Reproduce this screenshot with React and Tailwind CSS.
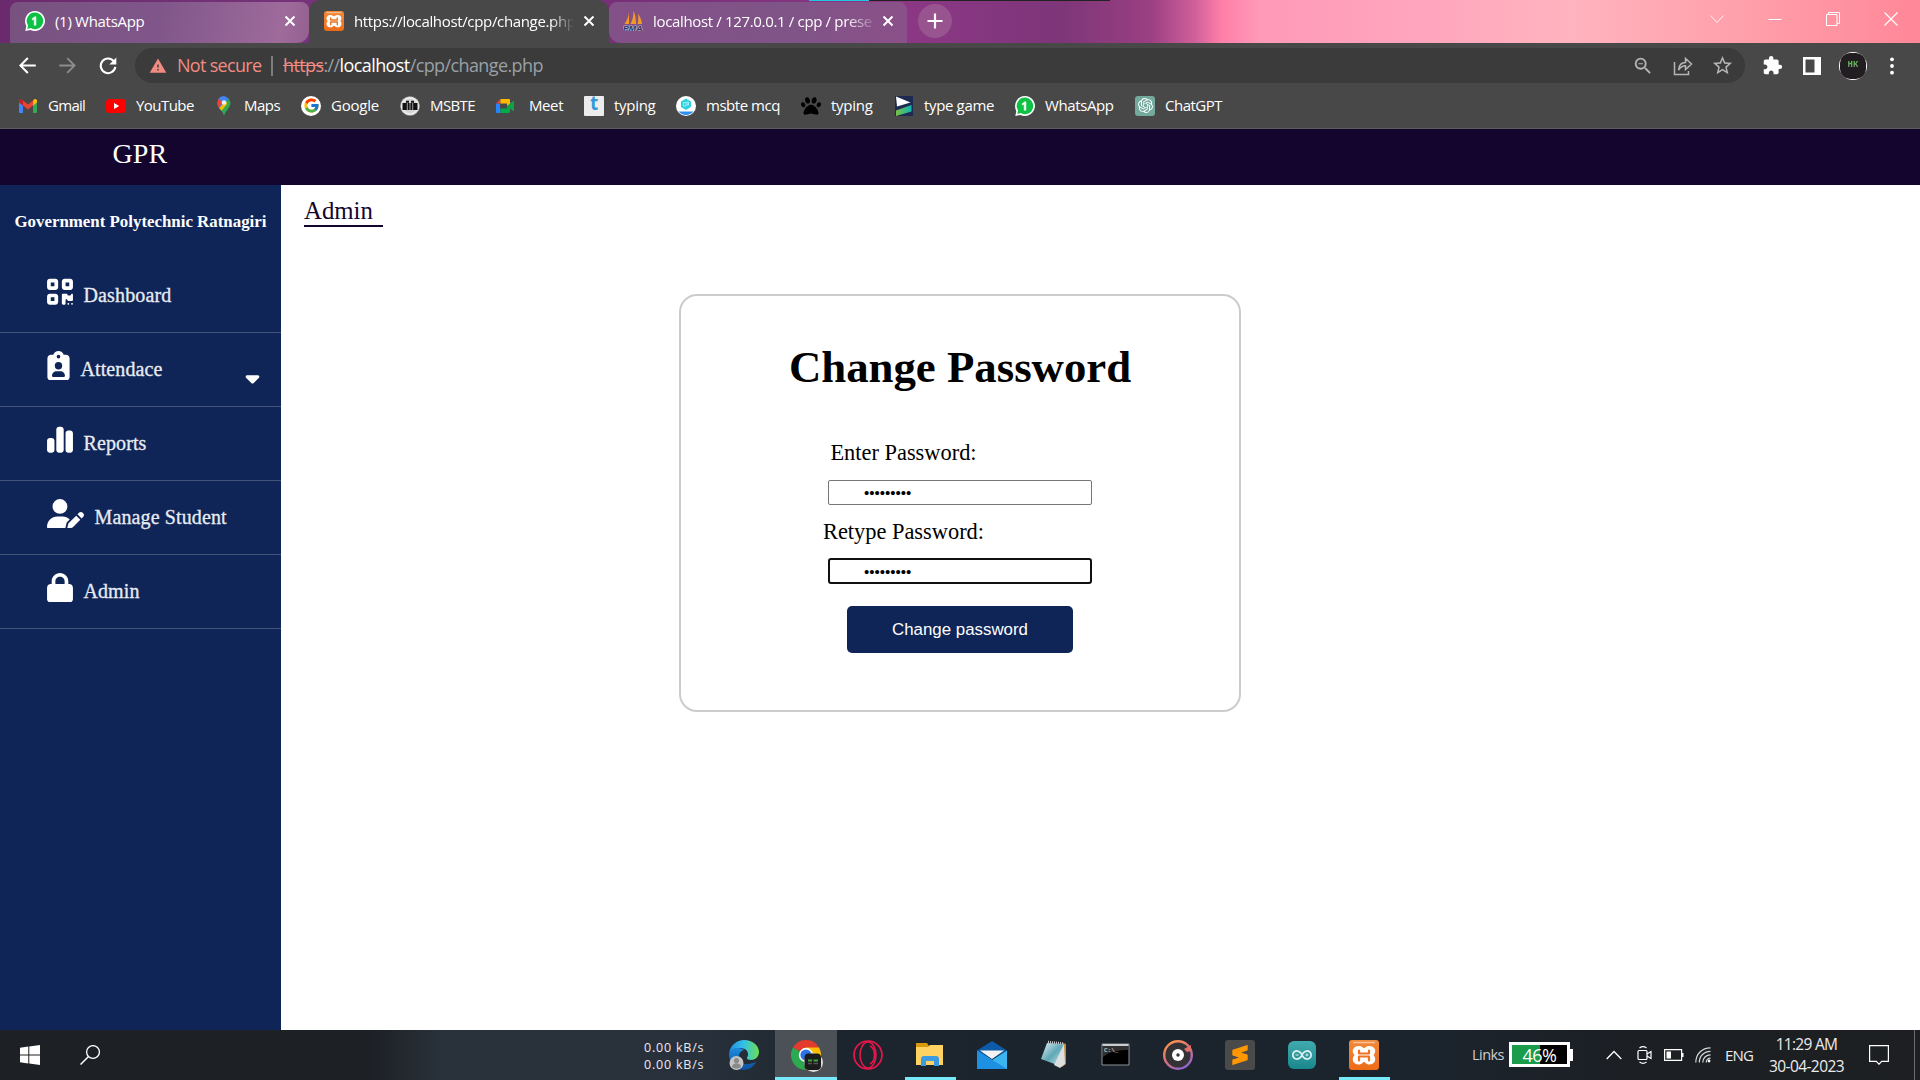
import React from "react";
import { FaQrcode, FaClipboardUser, FaChartSimple, FaUserPen, FaLock, FaPaw, FaSortDown } from "react-icons/fa6";
import { SiSublimetext, SiArduino, SiOpenai } from "react-icons/si";
import { FcGoogle } from "react-icons/fc";
import { MdExtension, MdWarning, MdStarOutline, MdZoomOut } from "react-icons/md";

/* ---------- small brand marks ---------- */
const WhatsAppIcon = () => (
  <svg viewBox="0 0 20 20" className="size-5 shrink-0">
    <path d="M10 0a10 10 0 1 1-4.6 18.9L.3 20l1-5.1A10 10 0 0 1 10 0z" fill="#fff" />
    <path d="M10 1.6a8.3 8.3 0 1 1-4.2 15.5l-3.5.8.8-3.4A8.3 8.3 0 0 1 10 1.6z" fill="#0cc143" />
    <path d="M10.9 14.2V5.8h-1L7.3 7.5v1.6l1.9-1.1v6.2z" fill="#fff" stroke="#fff" strokeWidth=".6" />
  </svg>
);
const XamppIcon = ({ size }) => (
  <span className={`${size} flex shrink-0 items-center justify-center rounded-[3px] bg-gradient-to-b from-[#f08a3c] to-[#ee6b14] text-white`}>
    <svg viewBox="0 0 30 30" className="size-full">
      <path d="M9.500 6c4 0 4 2 5.500 2s1.500-2 5.500-2c5.500 0 7.500 5.500 4 9 3.500 4 1.500 9.500-4 9.500-4 0-4-2.500-5.500-2.500s-1.500 2.500-5.500 2.500c-5.500 0-7.500-5.500-4-9.500-3.500-3.500-1.500-9 4-9z" fill="#fff" />
      <path d="M10 10.500v3h10v-3M10 20.500v-4h10v4" fill="none" stroke="#ee7422" strokeWidth="2.200" strokeLinecap="round" strokeLinejoin="round" />
      <path d="M4 2.500h22" stroke="#f8c39a" strokeWidth="1.500" />
    </svg>
  </span>
);
const PmaIcon = () => (
  <svg viewBox="0 0 20 20" className="size-5 shrink-0">
    <path d="M6 1v12H1.500C4 9 5.500 6 6 1zM10.500 0c2 4 2.500 8 2.500 13H7.500C9.500 9 10.500 5 10.500 0zM15 3c2.500 3 3.500 6 4 10h-4.500c1-3 1-6 .5-10z" fill="#f39a24" />
    <text x="0" y="19.500" fontSize="8" fontWeight="bold" fontStyle="italic" textLength="19.500" lengthAdjust="spacingAndGlyphs" fontFamily="Liberation Sans, sans-serif" fill="#2c3462" stroke="#b9bdd6" strokeWidth="1.200" className="[paint-order:stroke]">PMA</text>
  </svg>
);
const GmailIcon = () => (
  <svg viewBox="0 0 20 20" className="size-5">
    <path d="M1 5v11a1 1 0 0 0 1 1h3V8z" fill="#4285f4" />
    <path d="M19 5v11a1 1 0 0 1-1 1h-3V8z" fill="#34a853" />
    <path d="M5 4.500l5 4 5-4v5l-5 4-5-4z" fill="#ea4335" />
    <path d="M1 5c0-2 2-2.500 3-1.500l1 1v5L1 6.500z" fill="#c5221f" />
    <path d="M19 5c0-2-2-2.500-3-1.500l-1 1v5l4-3z" fill="#fbbc04" />
  </svg>
);
const YouTubeIcon = () => (
  <svg viewBox="0 0 20 20" className="size-5">
    <rect y="3" width="20" height="14" rx="3.500" fill="#f00" />
    <path d="M8 7l5.200 3L8 13z" fill="#fff" />
  </svg>
);
const MapsIcon = () => (
  <svg viewBox="0 0 20 20" className="size-5">
    <path d="M4.500 10.500C6 14 9 15 10 20c1-5 6.500-8 6.500-13.500L15 3z" fill="#34a853" />
    <path d="M3.500 7c0 2 .6 3.500 1.700 5L15 2.500 10 0C6 0 3.500 3 3.500 7z" fill="#4285f4" />
    <path d="M4.500 2.800L8 5.700 5.200 12C4 10.500 3.500 9 3.500 7z" fill="#ea4335" />
    <path d="M5.200 12L12 5l1 3-5.500 6.800z" fill="#fbbc04" />
    <circle cx="10" cy="6.500" r="2.300" fill="#e9eef8" />
  </svg>
);
const GoogleBadge = () => (
  <span className="flex size-5 items-center justify-center rounded-full bg-white"><FcGoogle size={17} /></span>
);
const MsbteIcon = () => (
  <svg viewBox="0 0 20 20" className="size-5">
    <circle cx="10" cy="10" r="9.600" fill="#e9e9e9" stroke="#8d8d8d" strokeWidth=".8" strokeDasharray="1.500 1" />
    <circle cx="10" cy="10" r="7" fill="#d2d2d2" />
    <path d="M2.500 7h15v7h-15z" fill="#111" />
    <path d="M7.300 7v7M12.700 7v7M10 4v10M5 5.500h10" stroke="#ddd" strokeWidth=".7" />
    <path d="M6 4.800h3v2H6zM11 4.800h3v2h-3z" fill="#111" />
  </svg>
);
const MeetIcon = () => (
  <svg viewBox="0 0 20 20" className="size-5">
    <path d="M1 7.500V16a1 1 0 0 0 1 1h3.500v-4.500H5V7.500z" fill="#2684fc" />
    <path d="M1 7.500L5.500 3v4.500z" fill="#ea4335" />
    <path d="M5.500 3H14a1 1 0 0 1 1 1v5l-3 1V7.500H5.500z" fill="#ffba00" />
    <path d="M5.500 17H14a1 1 0 0 0 1-1v-7l-3 1v2.500H5.500z" fill="#00ac47" />
    <path d="M12 10l6-5c.6-.4 1-.2 1 .5v9c0 .7-.4.900-1 .5z" fill="#11a046" />
  </svg>
);
const TypingIcon = () => (
  <span className="flex size-5 items-center justify-center rounded-[1px] bg-[#ececec] pb-1 font-['Open_Sans',sans-serif] text-[19px] leading-none font-bold text-[#3498db]">t</span>
);
const McqIcon = () => (
  <svg viewBox="0 0 20 20" className="size-5">
    <circle cx="10" cy="10" r="10" fill="#fff" />
    <path d="M10 2.500l5 2.900v5.700L10 14l-5-2.900V5.400z" fill="#2fd0e0" />
    <path d="M7.500 6.500h2.500v3.500H7.500zM11 6h1.500v3H11z" fill="none" stroke="#b9f3f8" strokeWidth=".8" />
    <path d="M2.500 15.500h15a10 10 0 0 1-15 0z" fill="#2f8ff0" />
  </svg>
);
const TypeGameIcon = () => (
  <svg viewBox="0 0 20 20" className="size-5">
    <defs><linearGradient id="tg" x1="0" x2="1"><stop offset="0" stopColor="#7ac142" /><stop offset="1" stopColor="#0fb5b0" /></linearGradient></defs>
    <path d="M1 0h18v20H1z" fill="#1f2a52" />
    <path d="M2 .5l14.500 6L3 10.500z" fill="#fff" />
    <path d="M17.500 9v6.500L2 20v-5.500z" fill="url(#tg)" />
  </svg>
);
const GptIcon = () => (
  <span className="flex size-5 items-center justify-center rounded-[3px] bg-[#74aa9c] text-white"><SiOpenai size={15} /></span>
);

/* ---------- browser chrome ---------- */
const CloseX = ({ className }) => (
  <svg viewBox="0 0 12 12" className={`size-3 shrink-0 ${className}`}><path d="M1.500 1.500l9 9m0-9l-9 9" stroke="#fff" strokeWidth="2" /></svg>
);

function Tab({ className, icon, title, titleClass }) {
  return (
    <div className={`flex items-center ${className}`}>
      {icon}
      <span className={`ml-[10px] w-[222px] shrink-0 overflow-hidden text-[15px] leading-5 whitespace-nowrap ${titleClass}`}>{title}</span>
      <CloseX className="ml-[7px]" />
    </div>
  );
}

function TabStrip() {
  return (
    <div className="relative flex h-[43px] bg-[linear-gradient(90deg,#6b2a6d_0px,#76337a_300px,#773078_620px,#8b3784_920px,#7d3679_1060px,#9a3f82_1150px,#d0609a_1195px,#ff7fa8_1222px,#ff9ab9_1260px,#ffa5bd_1420px,#ffb4bf_1570px,#ff9ba6_1780px,#ff8798_1920px)] pl-[10px] text-white">
      <Tab
        className="mt-[2px] h-[41px] w-[299px] rounded-t-lg rounded-br-xl bg-[linear-gradient(100deg,#77527f_0%,#80568a_50%,#9e6b9b_90%,#94608f_100%)] pb-[4px] pl-[15px]"
        icon={<WhatsAppIcon />}
        title="(1) WhatsApp"
        titleClass="tracking-[-0.3px]"
      />
      <Tab
        className="h-[43px] w-[300px] rounded-t-xl bg-[#484848] pb-[2px] pl-[15px]"
        icon={<XamppIcon size="size-5" />}
        title="https://localhost/cpp/change.php"
        titleClass="tracking-[-0.34px] [mask-image:linear-gradient(90deg,#000_197px,transparent_220px)]"
      />
      <Tab
        className="mt-[2px] h-[41px] w-[298px] rounded-t-lg rounded-bl-xl bg-[linear-gradient(90deg,#835088,#7f5487_60%,#8b5089)] pb-[4px] pl-[14px]"
        icon={<PmaIcon />}
        title="localhost / 127.0.0.1 / cpp / prese"
        titleClass="tracking-[-0.34px] [mask-image:linear-gradient(90deg,#000_193px,transparent_225px)]"
      />
      <div className="mt-[4px] ml-[11px] flex size-[34px] items-center justify-center rounded-full bg-[#97548f]">
        <svg viewBox="0 0 16 16" className="size-4"><path d="M8 .5v15M.5 8h15" stroke="#fff" strokeWidth="2.200" /></svg>
      </div>
      <div className="mt-[10px] mr-[22px] ml-auto flex h-[17px] items-center gap-[44px]">
        <svg viewBox="0 0 14 14" className="size-[14px]"><path d="M.5 3.500l6.500 7 6.500-7" fill="none" stroke="#fff" strokeWidth="1" opacity=".85" /></svg>
        <svg viewBox="0 0 14 14" className="size-[14px]"><path d="M.5 7.500h13" stroke="#fff" strokeWidth="1" /></svg>
        <svg viewBox="0 0 14 14" className="size-[14px]"><path d="M.5 2.500h10.500v11H.5zM2.500 2.500v-2h11v11h-2.500" fill="none" stroke="#fff" /></svg>
        <svg viewBox="0 0 14 14" className="size-[14px]"><path d="M.5.5l13 13m0-13l-13 13" stroke="#fff" strokeWidth="1.200" /></svg>
      </div>
      <div className="absolute top-0 left-[809px] flex h-[1px] w-[301px] bg-[#222]"><span className="w-[60px] bg-[#1fc8e6]" /></div>
    </div>
  );
}

function Toolbar() {
  return (
    <div className="flex h-[45px] items-center bg-[#484848] text-white">
      <svg viewBox="0 0 16 16" className="ml-[19px] size-[17px]"><path d="M15.800 8H1.500M8.300 1L1.300 8l7 7" fill="none" stroke="#fff" strokeWidth="2" /></svg>
      <svg viewBox="0 0 16 16" className="ml-[23px] size-[17px]"><path d="M.2 8h14.300M7.700 1l7 7-7 7" fill="none" stroke="#8c8c8c" strokeWidth="1.700" /></svg>
      <svg viewBox="0 0 18 18" className="ml-[23px] size-[18px]"><path d="M15 4.600A7.300 7.300 0 1 0 16.300 9.800" fill="none" stroke="#fff" strokeWidth="2.100" /><path d="M17.300.6v7H10.300z" fill="#fff" /></svg>
      <div className="ml-[18px] flex h-[35px] w-[1610px] items-center rounded-full bg-[#3b3b3b] pl-[14px]">
        <MdWarning size={18} color="#f28b82" />
        <span className="mb-px ml-[10px] w-[87px] text-[18px] leading-6 tracking-[-0.7px] whitespace-nowrap text-[#f28b82]">Not secure</span>
        <span className="ml-[7px] h-5 w-[2px] bg-[#7d7d7d]" />
        <span className="mb-px ml-[10px] text-[18px] leading-6 tracking-[-0.6px] whitespace-nowrap text-[#9aa0a6]">
          <span className="text-[#f28b82] line-through">https</span>://<span className="text-white">localhost</span>/cpp/change.php
        </span>
        <div className="mr-[11px] ml-auto flex items-center text-[#b5b5b5]">
          <MdZoomOut size={22} />
          <svg viewBox="0 0 20 20" className="ml-[19px] size-5"><path d="M1.500 6v12.500h14V15M5.500 14c.5-5 3-7.500 7-7.500V2.500l6 5.500-6 5.500V9.800c-3 0-5 1-7 4.200z" fill="none" stroke="#b5b5b5" strokeWidth="1.500" /></svg>
          <MdStarOutline size={23} className="ml-[18px]" />
        </div>
      </div>
      <MdExtension size={21} className="ml-[17px]" />
      <svg viewBox="0 0 18 18" className="ml-[20px] size-[18px]"><path d="M0 0h18v18H0z" fill="#fff" /><path d="M2.500 2.500h9v13h-9z" fill="#484848" /></svg>
      <div className="ml-[18px] flex size-[28px] items-center justify-center rounded-full bg-white">
        <div className="flex size-[26px] items-center justify-center rounded-[10px] bg-[#211d20] font-['Liberation_Mono',monospace] text-[9px] leading-none font-bold"><span className="bg-gradient-to-b from-[#4ed04a] to-[#777] bg-clip-text text-transparent">HK</span></div>
      </div>
      <svg viewBox="0 0 4 18" className="ml-[23px] h-[18px] w-1"><circle cx="2" cy="2.300" r="1.900" fill="#fff" /><circle cx="2" cy="9" r="1.900" fill="#fff" /><circle cx="2" cy="15.700" r="1.900" fill="#fff" /></svg>
    </div>
  );
}

const bookmarks = [
  ["Gmail", GmailIcon, "w-[88px]", "tracking-[-0.7px]"],
  ["YouTube", YouTubeIcon, "w-[108px]", "tracking-[-0.55px]"],
  ["Maps", MapsIcon, "w-[87px]", "tracking-[-0.5px]"],
  ["Google", GoogleBadge, "w-[99px]", "tracking-[-0.22px]"],
  ["MSBTE", MsbteIcon, "w-[95px]", "tracking-[-0.6px]"],
  ["Meet", MeetIcon, "w-[89px]", "tracking-[-0.4px] ml-[14px]!"],
  ["typing", TypingIcon, "w-[92px]", "tracking-[-0.3px]"],
  ["msbte mcq", McqIcon, "w-[125px]", "tracking-[-0.46px]"],
  ["typing", FaPaw, "w-[93px]", "tracking-[-0.25px]"],
  ["type game", TypeGameIcon, "w-[121px]", "tracking-[-0.35px]"],
  ["WhatsApp", WhatsAppIcon, "w-[120px]", "tracking-[-0.4px]"],
  ["ChatGPT", GptIcon, "w-[100px]", "tracking-[-0.5px]"],
];

function Bookmarks() {
  return (
    <div className="flex h-[41px] items-center border-b border-[#5c5c5c] bg-[#484848] pb-[5px] pl-[18px] text-white">
      {bookmarks.map(([label, Icon, w, track], i) => (
        <div key={i} className={`flex shrink-0 items-center ${w}`}>
          <span className={Icon === FaPaw ? "text-black" : ""}><Icon size={20} /></span>
          <span className={`mb-px ml-[10px] text-[15px] leading-5 whitespace-nowrap ${track}`}>{label}</span>
        </div>
      ))}
    </div>
  );
}

/* ---------- page ---------- */
const nav = [
  ["Dashboard", FaQrcode, "w-[26px]", "tracking-[0.15px]"],
  ["Attendace", FaClipboardUser, "w-[23px]", "tracking-[0.1px]"],
  ["Reports", FaChartSimple, "w-[26px]", "tracking-[0.11px]"],
  ["Manage Student", FaUserPen, "w-[37px]", "tracking-[0.12px]"],
  ["Admin", FaLock, "w-[26px]", "tracking-[0.09px]"],
];

function Sidebar() {
  return (
    <aside className="w-[281px] shrink-0 bg-[#0f2557] text-white">
      <h2 className="h-[74px] pl-[14.500px] text-[16.870px] leading-[74px] font-bold whitespace-nowrap">Government Polytechnic Ratnagiri</h2>
      {nav.map(([label, Icon, w, track]) => (
        <div key={label} className="flex h-[74px] items-center border-b border-[#445479] pl-[47px]">
          <Icon className={`mb-[8px] h-[29.600px] shrink-0 ${w}`} />
          <span className={`mb-[2px] ml-[10.500px] text-[20px] leading-6 whitespace-nowrap [-webkit-text-stroke:0.3px_#e8ebf2] text-[#e8ebf2] ${track}`}>{label}</span>
          {label === "Attendace" && <FaSortDown className="mt-[9px] mr-[18px] ml-auto h-[22px] w-[21px]" />}
        </div>
      ))}
    </aside>
  );
}

function PasswordCard() {
  return (
    <form className="mx-auto mt-[67px] mr-[679px] flex h-[418px] w-[562px] flex-col items-center rounded-[18px] border-2 border-[#ccc] text-black" onSubmit={(e) => e.preventDefault()}>
      <h1 className="mt-[45px] text-[44.800px] leading-[52px] font-bold whitespace-nowrap">Change Password</h1>
      <label className="mt-[47px] mr-[113px] text-[22.400px] leading-[26px]">Enter Password:</label>
      <input type="password" defaultValue="123456789" className="mt-[14px] h-[25px] w-[264px] rounded-[2px] border border-[#767676] bg-white pl-[35px] font-['Liberation_Sans',sans-serif] text-[15px] outline-none" />
      <label className="mt-[14px] mr-[113px] text-[22.400px] leading-[26px]">Retype Password:</label>
      <input type="password" defaultValue="123456789" className="mt-[13px] h-[26px] w-[264px] rounded-[3px] border-2 border-[#101010] bg-white pl-[34px] font-['Liberation_Sans',sans-serif] text-[15px] outline-none" />
      <button className="mt-[22px] h-[47px] w-[226px] rounded-[5px] bg-[#0f2557] font-['Liberation_Sans',sans-serif] text-[16.870px] text-white">Change password</button>
    </form>
  );
}

/* ---------- taskbar ---------- */
const EdgeIcon = () => (
  <svg viewBox="0 0 30 30" className="size-[30px]">
    <defs>
      <linearGradient id="e1" x1="0" x2="1"><stop offset="0" stopColor="#1f8fe0" /><stop offset=".5" stopColor="#35c1e8" /><stop offset="1" stopColor="#6be04c" /></linearGradient>
      <linearGradient id="e2" y1="0" y2="1" x1="0" x2="0"><stop offset="0" stopColor="#1b8de0" /><stop offset="1" stopColor="#0c4f9e" /></linearGradient>
    </defs>
    <path d="M0 14C1 5 8 0 15 0c9 0 15 6 15 12 0 5-4 8-8 8-3 0-4-1-4-2s1-1 1-4c0-4-4-6-8-6C6 8 1 10 0 14z" fill="url(#e1)" />
    <path d="M0 14c1-4 5-6 9-6 3 0 5 1 6 2-4 1-6 5-5 9 1 5 7 7 17 3-3 5-7 8-12 8C6 30 0 23 0 14z" fill="url(#e2)" />
    <circle cx="7.500" cy="23" r="7" fill="#c4c4c4" /><circle cx="7.500" cy="20.500" r="2.600" fill="#8a8a8a" /><path d="M3 27c0-5 9-5 9 0a7 7 0 0 1-9 0z" fill="#8a8a8a" />
  </svg>
);
const ChromeIcon = () => (
  <svg viewBox="0 0 32 32" className="mt-[2px] ml-[1px] size-8">
    <path d="M15 15L2 7.500A15 15 0 0 1 28 7.500z" fill="#e33b2e" />
    <path d="M15 15L2 7.500A15 15 0 0 0 15 30l6-12z" fill="#2da94f" />
    <path d="M15 15V7.500h13A15 15 0 0 1 15 30z" fill="#fdbd00" />
    <circle cx="15" cy="15" r="7.200" fill="#fff" /><circle cx="15" cy="15" r="5.600" fill="#2a73e8" />
    <circle cx="22.500" cy="22.500" r="9.500" fill="#ddd" /><rect x="13.500" y="13.500" width="16.500" height="16.500" rx="4" fill="#1c1c1c" />
    <path d="M17 20.500h4M22.500 20.500h4.500" stroke="#35a536" strokeWidth="2" /><path d="M17 23.500h4M22.500 23.500h4.500" stroke="#555" strokeWidth="1.500" />
  </svg>
);
const OperaIcon = () => (
  <svg viewBox="0 0 30 30" className="size-[30px]" fill="none" stroke="#e8174b"><circle cx="15" cy="15" r="14" strokeWidth="1.700" /><ellipse cx="15" cy="15" rx="8" ry="13" strokeWidth="1.600" /><path d="M17 6c6 3 6 15 0 18" strokeWidth="1.600" /></svg>
);
const ExplorerIcon = () => (
  <svg viewBox="0 0 30 30" className="size-[30px]">
    <path d="M1 3h11l2 3v3H1z" fill="#d99a0b" /><path d="M1 7h12l2-2h13v20H1z" fill="#ffd262" />
    <path d="M6 26v-7c0-2 1-3 3-3h12c2 0 3 1 3 3v7h-5v-5h-8v5z" fill="#3b9be0" />
  </svg>
);
const MailIcon = () => (
  <svg viewBox="0 0 30 30" className="size-[30px]">
    <path d="M0 10.500L15 1l15 9.500L15 19z" fill="#0c5aa8" /><path d="M3 10.500h24L15 19z" fill="#f2f2f2" />
    <path d="M0 10.500l15 9.500 15-9.500V29H0z" fill="#3ab5f2" /><path d="M0 29V10.500L30 29z" fill="#1d90e2" />
  </svg>
);
const NotepadIcon = () => (
  <svg viewBox="0 0 30 30" className="size-[30px]">
    <defs><linearGradient id="np" x1="0" x2="1" y2="1"><stop offset="0" stopColor="#e4f3f6" /><stop offset=".5" stopColor="#5fa8b6" /><stop offset="1" stopColor="#cfe9ee" /></linearGradient></defs>
    <path d="M24 3l3 1v20l-4 3z" fill="#c08a3c" /><path d="M8 3l17 1-4 22L2 19z" fill="url(#np)" /><path d="M25 4l1 20-5 4-6-3z" fill="#dcdfe0" /><path d="M9 2l15 1.500" stroke="#ccc" strokeWidth="2.500" strokeDasharray="1 1" />
  </svg>
);
const CmdIcon = () => (
  <svg viewBox="0 0 30 30" className="size-[30px]">
    <path d="M1 4h27v21H1z" fill="#000" stroke="#8f9499" strokeWidth="1" /><path d="M1.500 4h26v2h-26z" fill="#c8cdd2" />
    <path d="M2 6h25v4C16 10 8 12 2 17z" fill="#303030" /><text x="3" y="12" fontSize="6" fill="#eee" fontFamily="Liberation Mono, monospace">C:\_</text>
  </svg>
);
const GrooveIcon = () => (
  <svg viewBox="0 0 30 30" className="size-[30px]">
    <defs><linearGradient id="gr" x1=".2" x2=".8" y1="0" y2="1"><stop offset="0" stopColor="#ff914d" /><stop offset=".5" stopColor="#d9707f" /><stop offset="1" stopColor="#8a63d8" /></linearGradient></defs>
    <circle cx="15" cy="15" r="13.800" fill="#333336" stroke="url(#gr)" strokeWidth="2.400" /><path d="M21 9l7-4v6l-4 1z" fill="#e0706e" />
    <circle cx="15" cy="15" r="6" fill="#fff" /><circle cx="15" cy="15" r="1.700" fill="#333" />
  </svg>
);
const SublimeIcon = () => <span className="flex size-[30px] items-center justify-center rounded-[3px] bg-[#4a4a4a] text-[#ff9800]"><SiSublimetext size={20} /></span>;
const ArduinoIcon = () => <span className="flex size-[28px] items-center justify-center rounded-[6px] bg-gradient-to-b from-[#41aaae] to-[#16888d] text-[#dff1f1]"><SiArduino size={20} /></span>;
const XamppTask = () => <XamppIcon size="size-[30px]" />;

const apps = [
  [EdgeIcon, ""], [ChromeIcon, "active"], [OperaIcon, ""], [ExplorerIcon, "open"], [MailIcon, ""], [NotepadIcon, ""],
  [CmdIcon, ""], [GrooveIcon, ""], [SublimeIcon, ""], [ArduinoIcon, ""], [XamppTask, "open"],
];

function Taskbar() {
  return (
    <footer className="flex h-[50px] shrink-0 items-center bg-[linear-gradient(90deg,#1d2024_0px,#1d2025_370px,#29313a_440px,#28303b_700px,#1c242d_850px,#1b232c_1450px,#1c1f23_1650px,#1d1f22_1920px)] font-['Open_Sans',sans-serif] text-[#ececec]">
      <svg viewBox="0 0 20 20" className="ml-[20px] size-5 shrink-0"><path d="M0 2.800l8.300-1.200v7.900H0zM9.300 1.400L20 0v9.500H9.300zM0 10.500h8.300v7.900L0 17.200zM9.300 10.500H20V20L9.300 18.600z" fill="#fff" /></svg>
      <svg viewBox="0 0 20 20" className="ml-[40px] size-5 shrink-0"><circle cx="13" cy="7" r="6.400" fill="none" stroke="#fff" strokeWidth="1.300" /><path d="M8.500 11.500L.5 19.500" stroke="#fff" strokeWidth="1.500" /></svg>
      <div className="mt-px ml-[544px] w-[61px] shrink-0 text-[12.500px] leading-[17px] tracking-[0.8px] whitespace-nowrap"><div>0.00 kB/s</div><div>0.00 kB/s</div></div>
      <div className="ml-[8px] flex h-full shrink-0">
        {apps.map(([Icon, state], i) => (
          <div key={i} className={`flex h-full w-[62px] flex-col items-center ${state === "active" ? "bg-[#4b5157]" : ""}`}>
            <div className="flex h-[47px] w-full items-center justify-center pt-[3px]"><Icon /></div>
            {state && <div className={`h-[3px] bg-[#76e9fb] ${state === "active" ? "w-full" : "w-[51px]"}`} />}
          </div>
        ))}
      </div>
      <div className="ml-auto flex h-full shrink-0 items-center">
        <span className="mb-px w-[37px] text-[14.500px] tracking-[-0.55px] text-[#cfcfcf]">Links</span>
        <div className="mb-px flex h-[25px] w-[61px] items-center justify-center border-[3px] border-white bg-[linear-gradient(90deg,#1a9c4b_28px,#000_28px)] text-[18px] leading-none tracking-[-0.49px] text-white">46%</div>
        <span className="h-3 w-[3px] bg-white" />
        <svg viewBox="0 0 16 10" className="ml-[33px] h-[10px] w-4"><path d="M.7 9L8 1.500 15.300 9" fill="none" stroke="#fff" strokeWidth="1.300" /></svg>
        <svg viewBox="0 0 16 18" className="ml-[15px] h-[18px] w-4" fill="none" stroke="#fff" strokeWidth="1.200"><rect x="1" y="4.500" width="9" height="9" rx="1" /><path d="M10 8l4-2.500v7L10 10M2.500 2c2-1.500 5-1.500 7 0M2.500 16c2 1.500 5 1.500 7 0" /></svg>
        <svg viewBox="0 0 20 12" className="ml-[11px] h-3 w-5"><path d="M.6.6h17v10.800H.6z" fill="none" stroke="#fff" strokeWidth="1.200" /><path d="M2.500 2.500h4.500v7H2.500zM18 4h1.500v4H18z" fill="#fff" /></svg>
        <svg viewBox="0 0 16 16" className="ml-[11px] size-4" fill="none" stroke="#d8d8d8" strokeWidth="1.200"><path d="M.8 15.500C.8 7 7 .8 15.500.8M4.300 15.500C4.300 9 9 4.300 15.500 4.300M7.800 15.500c0-4.500 3.200-7.700 7.700-7.700M11.200 15.500c0-2.500 1.800-4.300 4.300-4.300" /><circle cx="14" cy="14" r="1.400" fill="#fff" stroke="none" /></svg>
        <span className="ml-[14px] w-[29px] text-[15px] leading-5 tracking-[-0.8px]">ENG</span>
        <div className="ml-[14px] flex w-[77px] flex-col items-center text-[15.500px] leading-[22.500px] whitespace-nowrap"><span className="tracking-[-0.7px]">11:29 AM</span><span className="tracking-[-0.6px]">30-04-2023</span></div>
        <svg viewBox="0 0 20 20" className="ml-[24px] size-5"><path d="M.6.6h18.800v15.800h-6.700L10 19.200l-2.700-2.800H.6z" fill="none" stroke="#fff" strokeWidth="1.200" /></svg>
        <span className="mr-[5px] ml-[25px] h-full w-px bg-[#6d6d6d]" />
      </div>
    </footer>
  );
}

export default function App() {
  return (
    <div className="flex h-[1080px] w-[1920px] flex-col overflow-hidden bg-white">
      <div className="shrink-0 font-['Open_Sans',sans-serif]">
        <TabStrip />
        <Toolbar />
        <Bookmarks />
      </div>
      <div className="flex min-h-0 grow flex-col font-['Liberation_Serif',serif]">
        <header className="h-[56px] shrink-0 bg-[#14052f] pl-[112.500px] text-[28px] leading-[49px] tracking-[0.1px] text-white">GPR</header>
        <div className="flex min-h-0 grow">
          <Sidebar />
          <main className="grow">
            <div className="mt-[11px] ml-[23px] h-[31px] w-[79px] border-b-2 border-[#14052f] text-[24.800px] leading-[30px] text-[#14052f]">Admin</div>
            <PasswordCard />
          </main>
        </div>
      </div>
      <Taskbar />
    </div>
  );
}
